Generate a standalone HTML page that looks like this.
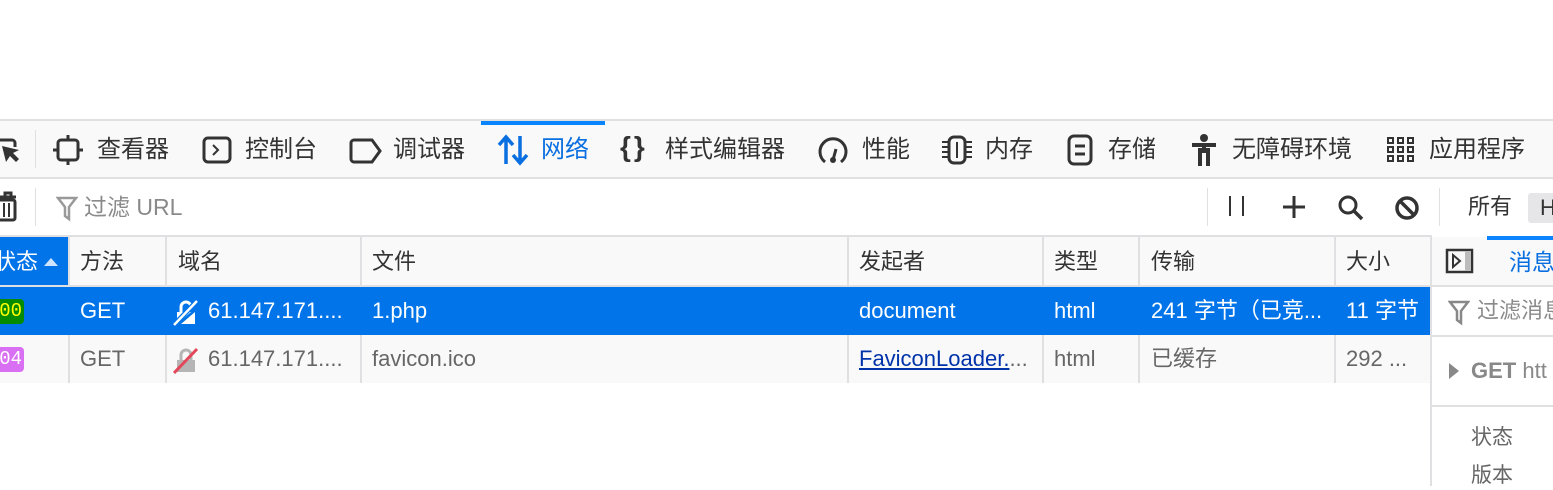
<!DOCTYPE html><html><head><meta charset="utf-8"><style>
body{margin:0;width:1553px;height:486px;overflow:hidden;background:#fff;position:relative;font-family:"Liberation Sans","Noto Sans CJK SC",sans-serif;font-size:22px;color:#333}
.a{position:absolute;white-space:nowrap}
.l{position:absolute;background:#e0e0e2}
svg{position:absolute}
.t{line-height:28px;top:136px;font-size:24px}
</style></head><body>
<div class="l" style="left:0;top:119px;width:1553px;height:2px"></div>
<div class="a" style="left:0;top:121px;width:1553px;height:57px;background:#f9f9fa"></div>
<div class="l" style="left:0;top:177px;width:1553px;height:2px"></div>
<div class="a" style="left:481px;top:121px;width:124px;height:4px;background:#0a84ff"></div>
<div class="l" style="left:35px;top:130px;width:1px;height:38px"></div>
<svg style="left:0;top:138px" width="22" height="28" viewBox="0 0 22 28"><path d="M-2 2h14a3 3 0 0 1 3 3v4" fill="none" stroke="#333" stroke-width="3"/><path d="M2 8l4 16 4-6 6 6 3-3-6-6 6-3z" fill="#333"/></svg>
<svg style="left:53px;top:135px" width="30" height="30"><rect x="5" y="5" width="20" height="20" rx="3" fill="none" stroke="#333" stroke-width="3"/><path d="M15 0v5M15 25v5M0 15h5M25 15h5" stroke="#333" stroke-width="3"/></svg>
<div class="a t" style="left:97px">查看器</div>
<svg style="left:202px;top:136px" width="30" height="28"><rect x="2" y="2" width="26" height="24" rx="4" fill="none" stroke="#333" stroke-width="3"/><path d="M11 9l5 5-5 5" fill="none" stroke="#333" stroke-width="2"/></svg>
<div class="a t" style="left:245px">控制台</div>
<svg style="left:349px;top:138px" width="34" height="26"><path d="M5 2h18l8 11-8 11H5a3 3 0 0 1-3-3V5a3 3 0 0 1 3-3z" fill="none" stroke="#333" stroke-width="3"/></svg>
<div class="a t" style="left:393px">调试器</div>
<svg style="left:497px;top:134px" width="32" height="32"><path d="M9 30V4M2 11l7-8 7 8M23 2v26M16 21l7 8 7-8" fill="none" stroke="#0a6fe0" stroke-width="3.5"/></svg>
<div class="a t" style="left:541px;color:#0a6fe0">网络</div>
<div class="a t" style="left:620px;top:133px;font-weight:bold;font-size:28px;letter-spacing:3px">{}</div>
<div class="a t" style="left:665px">样式编辑器</div>
<svg style="left:817px;top:134px" width="32" height="32"><path d="M8 28A13 13 0 1 1 24 28" fill="none" stroke="#333" stroke-width="3"/><path d="M16 26l3-11" stroke="#333" stroke-width="3"/><circle cx="16" cy="26" r="3" fill="#333"/></svg>
<div class="a t" style="left:862px">性能</div>
<svg style="left:940px;top:134px" width="34" height="32"><rect x="9" y="3" width="16" height="26" rx="5" fill="none" stroke="#333" stroke-width="3"/><path d="M2 8h6M2 13h6M2 18h6M2 23h6M26 8h6M26 13h6M26 18h6M26 23h6M17 8v16" stroke="#333" stroke-width="2"/></svg>
<div class="a t" style="left:985px">内存</div>
<svg style="left:1066px;top:134px" width="28" height="32"><rect x="3" y="2" width="22" height="28" rx="5" fill="none" stroke="#333" stroke-width="3"/><path d="M9 12h10M9 20h10" stroke="#333" stroke-width="3"/></svg>
<div class="a t" style="left:1108px">存储</div>
<svg style="left:1190px;top:134px" width="28" height="32"><circle cx="14" cy="4" r="4" fill="#333"/><path d="M2 11h24M14 11v8M10 14v18M18 14v18" stroke="#333" stroke-width="4"/></svg>
<div class="a t" style="left:1232px">无障碍环境</div>
<svg style="left:1386px;top:136px" width="30" height="28"><g fill="none" stroke="#333" stroke-width="2"><rect x="2" y="2" width="5" height="5"/><rect x="12" y="2" width="5" height="5"/><rect x="22" y="2" width="5" height="5"/><rect x="2" y="11" width="5" height="5"/><rect x="12" y="11" width="5" height="5"/><rect x="22" y="11" width="5" height="5"/><rect x="2" y="20" width="5" height="5"/><rect x="12" y="20" width="5" height="5"/><rect x="22" y="20" width="5" height="5"/></g></svg>
<div class="a t" style="left:1429px">应用程序</div>
<!-- toolbar -->
<svg style="left:0;top:191px" width="18" height="32"><path d="M-2 6h18M5 6V2h6v4" fill="none" stroke="#333" stroke-width="3"/><rect x="-2" y="9" width="17" height="20" rx="2" fill="none" stroke="#333" stroke-width="3"/><path d="M4 12v14M9 12v14" stroke="#333" stroke-width="2"/></svg>
<div class="l" style="left:35px;top:188px;width:1px;height:38px"></div>
<svg style="left:56px;top:196px" width="22" height="26"><path d="M2 2h18l-7 9v12l-4-3v-9z" fill="none" stroke="#999" stroke-width="2.5"/></svg>
<div class="a" style="left:84px;top:193px;line-height:28px;color:#8a8a8a;font-size:23px">过滤 URL</div>
<div class="l" style="left:1207px;top:188px;width:1px;height:38px"></div>
<div class="a" style="left:1229px;top:196px;width:2px;height:20px;background:#333"></div>
<div class="a" style="left:1242px;top:196px;width:2px;height:20px;background:#333"></div>
<svg style="left:1282px;top:195px" width="24" height="24"><path d="M12 1v22M1 12h22" stroke="#333" stroke-width="3"/></svg>
<svg style="left:1337px;top:194px" width="28" height="28"><circle cx="11" cy="11" r="8" fill="none" stroke="#333" stroke-width="3"/><path d="M17 17l8 8" stroke="#333" stroke-width="3.5"/></svg>
<svg style="left:1394px;top:195px" width="26" height="26"><circle cx="13" cy="13" r="10" fill="none" stroke="#333" stroke-width="3.5"/><path d="M6 6l14 14" stroke="#333" stroke-width="3.5"/></svg>
<div class="l" style="left:1439px;top:188px;width:1px;height:38px"></div>
<div class="a" style="left:1468px;top:193px;line-height:28px">所有</div>
<div class="a" style="left:1528px;top:193px;width:30px;height:30px;background:#e6e6e8;border-radius:3px;line-height:30px;padding-left:12px">H</div>
<div class="l" style="left:0;top:235px;width:1430px;height:2px"></div>
<!-- header -->
<div class="a" style="left:0;top:237px;width:1430px;height:49px;background:#f9f9fa"></div>
<div class="a" style="left:0;top:237px;width:68px;height:49px;background:#0074e8"></div>
<div class="a" style="left:-6px;top:248px;line-height:28px;color:#fff">状态</div>
<svg style="left:44px;top:257px" width="14" height="10"><path d="M0 9L7 1l7 8z" fill="#cfe4ff"/></svg>
<div class="l" style="left:0;top:285px;width:1430px;height:2px"></div>
<div class="a" style="left:80px;top:248px;line-height:28px">方法</div>
<div class="a" style="left:178px;top:248px;line-height:28px">域名</div>
<div class="a" style="left:372px;top:248px;line-height:28px">文件</div>
<div class="a" style="left:859px;top:248px;line-height:28px">发起者</div>
<div class="a" style="left:1054px;top:248px;line-height:28px">类型</div>
<div class="a" style="left:1151px;top:248px;line-height:28px">传输</div>
<div class="a" style="left:1346px;top:248px;line-height:28px">大小</div>
<!-- column separators (header and row2 only) -->
<div class="l" style="left:68px;top:237px;width:2px;height:48px"></div>
<div class="l" style="left:165px;top:237px;width:2px;height:48px"></div>
<div class="l" style="left:360px;top:237px;width:2px;height:48px"></div>
<div class="l" style="left:847px;top:237px;width:2px;height:48px"></div>
<div class="l" style="left:1042px;top:237px;width:2px;height:48px"></div>
<div class="l" style="left:1138px;top:237px;width:2px;height:48px"></div>
<div class="l" style="left:1334px;top:237px;width:2px;height:48px"></div>
<!-- row1 -->
<div class="a" style="left:0;top:287px;width:1430px;height:48px;background:#0074e8"></div>
<div class="a" style="left:-8px;top:299px;width:32px;height:25px;background:#058b00;border-radius:4px;color:#ff0;font-family:'Liberation Mono',monospace;font-size:19px;line-height:25px;text-align:right;padding-right:2px;box-sizing:border-box">00</div>
<div class="a" style="left:80px;top:297px;line-height:28px;color:#fff">GET</div>
<svg style="left:173px;top:298px" width="26" height="28"><path d="M8 14V9a5 5 0 0 1 10 0" fill="none" stroke="#fff" stroke-width="3"/><path d="M4 14h14L4 26z M8 26h14V14z" fill="#fff"/><path d="M1 27L24 3" stroke="#0074e8" stroke-width="5"/><path d="M1 27L24 3" stroke="#fff" stroke-width="2.5"/></svg>
<div class="a" style="left:208px;top:297px;line-height:28px;color:#fff">61.147.171....</div>
<div class="a" style="left:372px;top:297px;line-height:28px;color:#fff">1.php</div>
<div class="a" style="left:859px;top:297px;line-height:28px;color:#fff">document</div>
<div class="a" style="left:1054px;top:297px;line-height:28px;color:#fff">html</div>
<div class="a" style="left:1151px;top:297px;line-height:28px;color:#fff">241 字节（已竞...</div>
<div class="a" style="left:1346px;top:297px;line-height:28px;color:#fff">11 字节</div>
<!-- row2 -->
<div class="a" style="left:0;top:335px;width:1430px;height:48px;background:#f9f9fa"></div>
<div class="l" style="left:68px;top:335px;width:2px;height:48px"></div>
<div class="l" style="left:165px;top:335px;width:2px;height:48px"></div>
<div class="l" style="left:360px;top:335px;width:2px;height:48px"></div>
<div class="l" style="left:847px;top:335px;width:2px;height:48px"></div>
<div class="l" style="left:1042px;top:335px;width:2px;height:48px"></div>
<div class="l" style="left:1138px;top:335px;width:2px;height:48px"></div>
<div class="l" style="left:1334px;top:335px;width:2px;height:48px"></div>
<div class="a" style="left:-8px;top:347px;width:32px;height:25px;background:#d96ff2;border-radius:4px;color:#fff;font-family:'Liberation Mono',monospace;font-size:19px;line-height:25px;text-align:right;padding-right:2px;box-sizing:border-box">04</div>
<div class="a" style="left:80px;top:345px;line-height:28px;color:#666">GET</div>
<svg style="left:173px;top:346px" width="26" height="28"><path d="M8 14V9a5 5 0 0 1 10 0v5" fill="none" stroke="#b5b5b5" stroke-width="3"/><rect x="4" y="14" width="18" height="12" fill="#b5b5b5"/><path d="M1 27L24 3" stroke="#e2485a" stroke-width="3"/></svg>
<div class="a" style="left:208px;top:345px;line-height:28px;color:#666">61.147.171....</div>
<div class="a" style="left:372px;top:345px;line-height:28px;color:#666">favicon.ico</div>
<div class="a" style="left:859px;top:345px;line-height:28px;color:#0033aa;text-decoration:underline">FaviconLoader.<span style="text-decoration:none;display:inline-block;color:#666">...</span></div>
<div class="a" style="left:1054px;top:345px;line-height:28px;color:#666">html</div>
<div class="a" style="left:1151px;top:345px;line-height:28px;color:#666">已缓存</div>
<div class="a" style="left:1346px;top:345px;line-height:28px;color:#666">292 ...</div>
<!-- right panel -->
<div class="l" style="left:1430px;top:235px;width:2px;height:251px"></div>
<div class="a" style="left:1432px;top:237px;width:121px;height:49px;background:#f9f9fa"></div>
<div class="a" style="left:1487px;top:236px;width:66px;height:4px;background:#0a84ff"></div>
<svg style="left:1445px;top:248px" width="30" height="26"><rect x="2" y="2" width="25" height="22" fill="none" stroke="#333" stroke-width="2.5"/><rect x="20" y="3" width="6" height="20" fill="#bbb"/><path d="M8 7l7 6-7 6z" fill="none" stroke="#333" stroke-width="2"/></svg>
<div class="a" style="left:1509px;top:248px;line-height:28px;color:#0a6fe0;font-size:23px">消息</div>
<div class="l" style="left:1432px;top:285px;width:121px;height:2px"></div>
<svg style="left:1448px;top:300px" width="22" height="26"><path d="M2 2h18l-7 9v12l-4-3v-9z" fill="none" stroke="#888" stroke-width="2.5"/></svg>
<div class="a" style="left:1477px;top:297px;line-height:28px;color:#8a8a8a">过滤消息</div>
<div class="l" style="left:1432px;top:335px;width:121px;height:2px"></div>
<svg style="left:1448px;top:362px" width="12" height="18"><path d="M1 1l10 8-10 8z" fill="#888"/></svg>
<div class="a" style="left:1471px;top:357px;line-height:28px;color:#888;font-weight:bold">GET <span style="font-weight:normal">htt</span></div>
<div class="l" style="left:1432px;top:405px;width:121px;height:2px"></div>
<div class="a" style="left:1471px;top:424px;line-height:28px;color:#666;font-size:21px">状态</div>
<div class="a" style="left:1471px;top:462px;line-height:28px;color:#666;font-size:21px">版本</div>
</body></html>
